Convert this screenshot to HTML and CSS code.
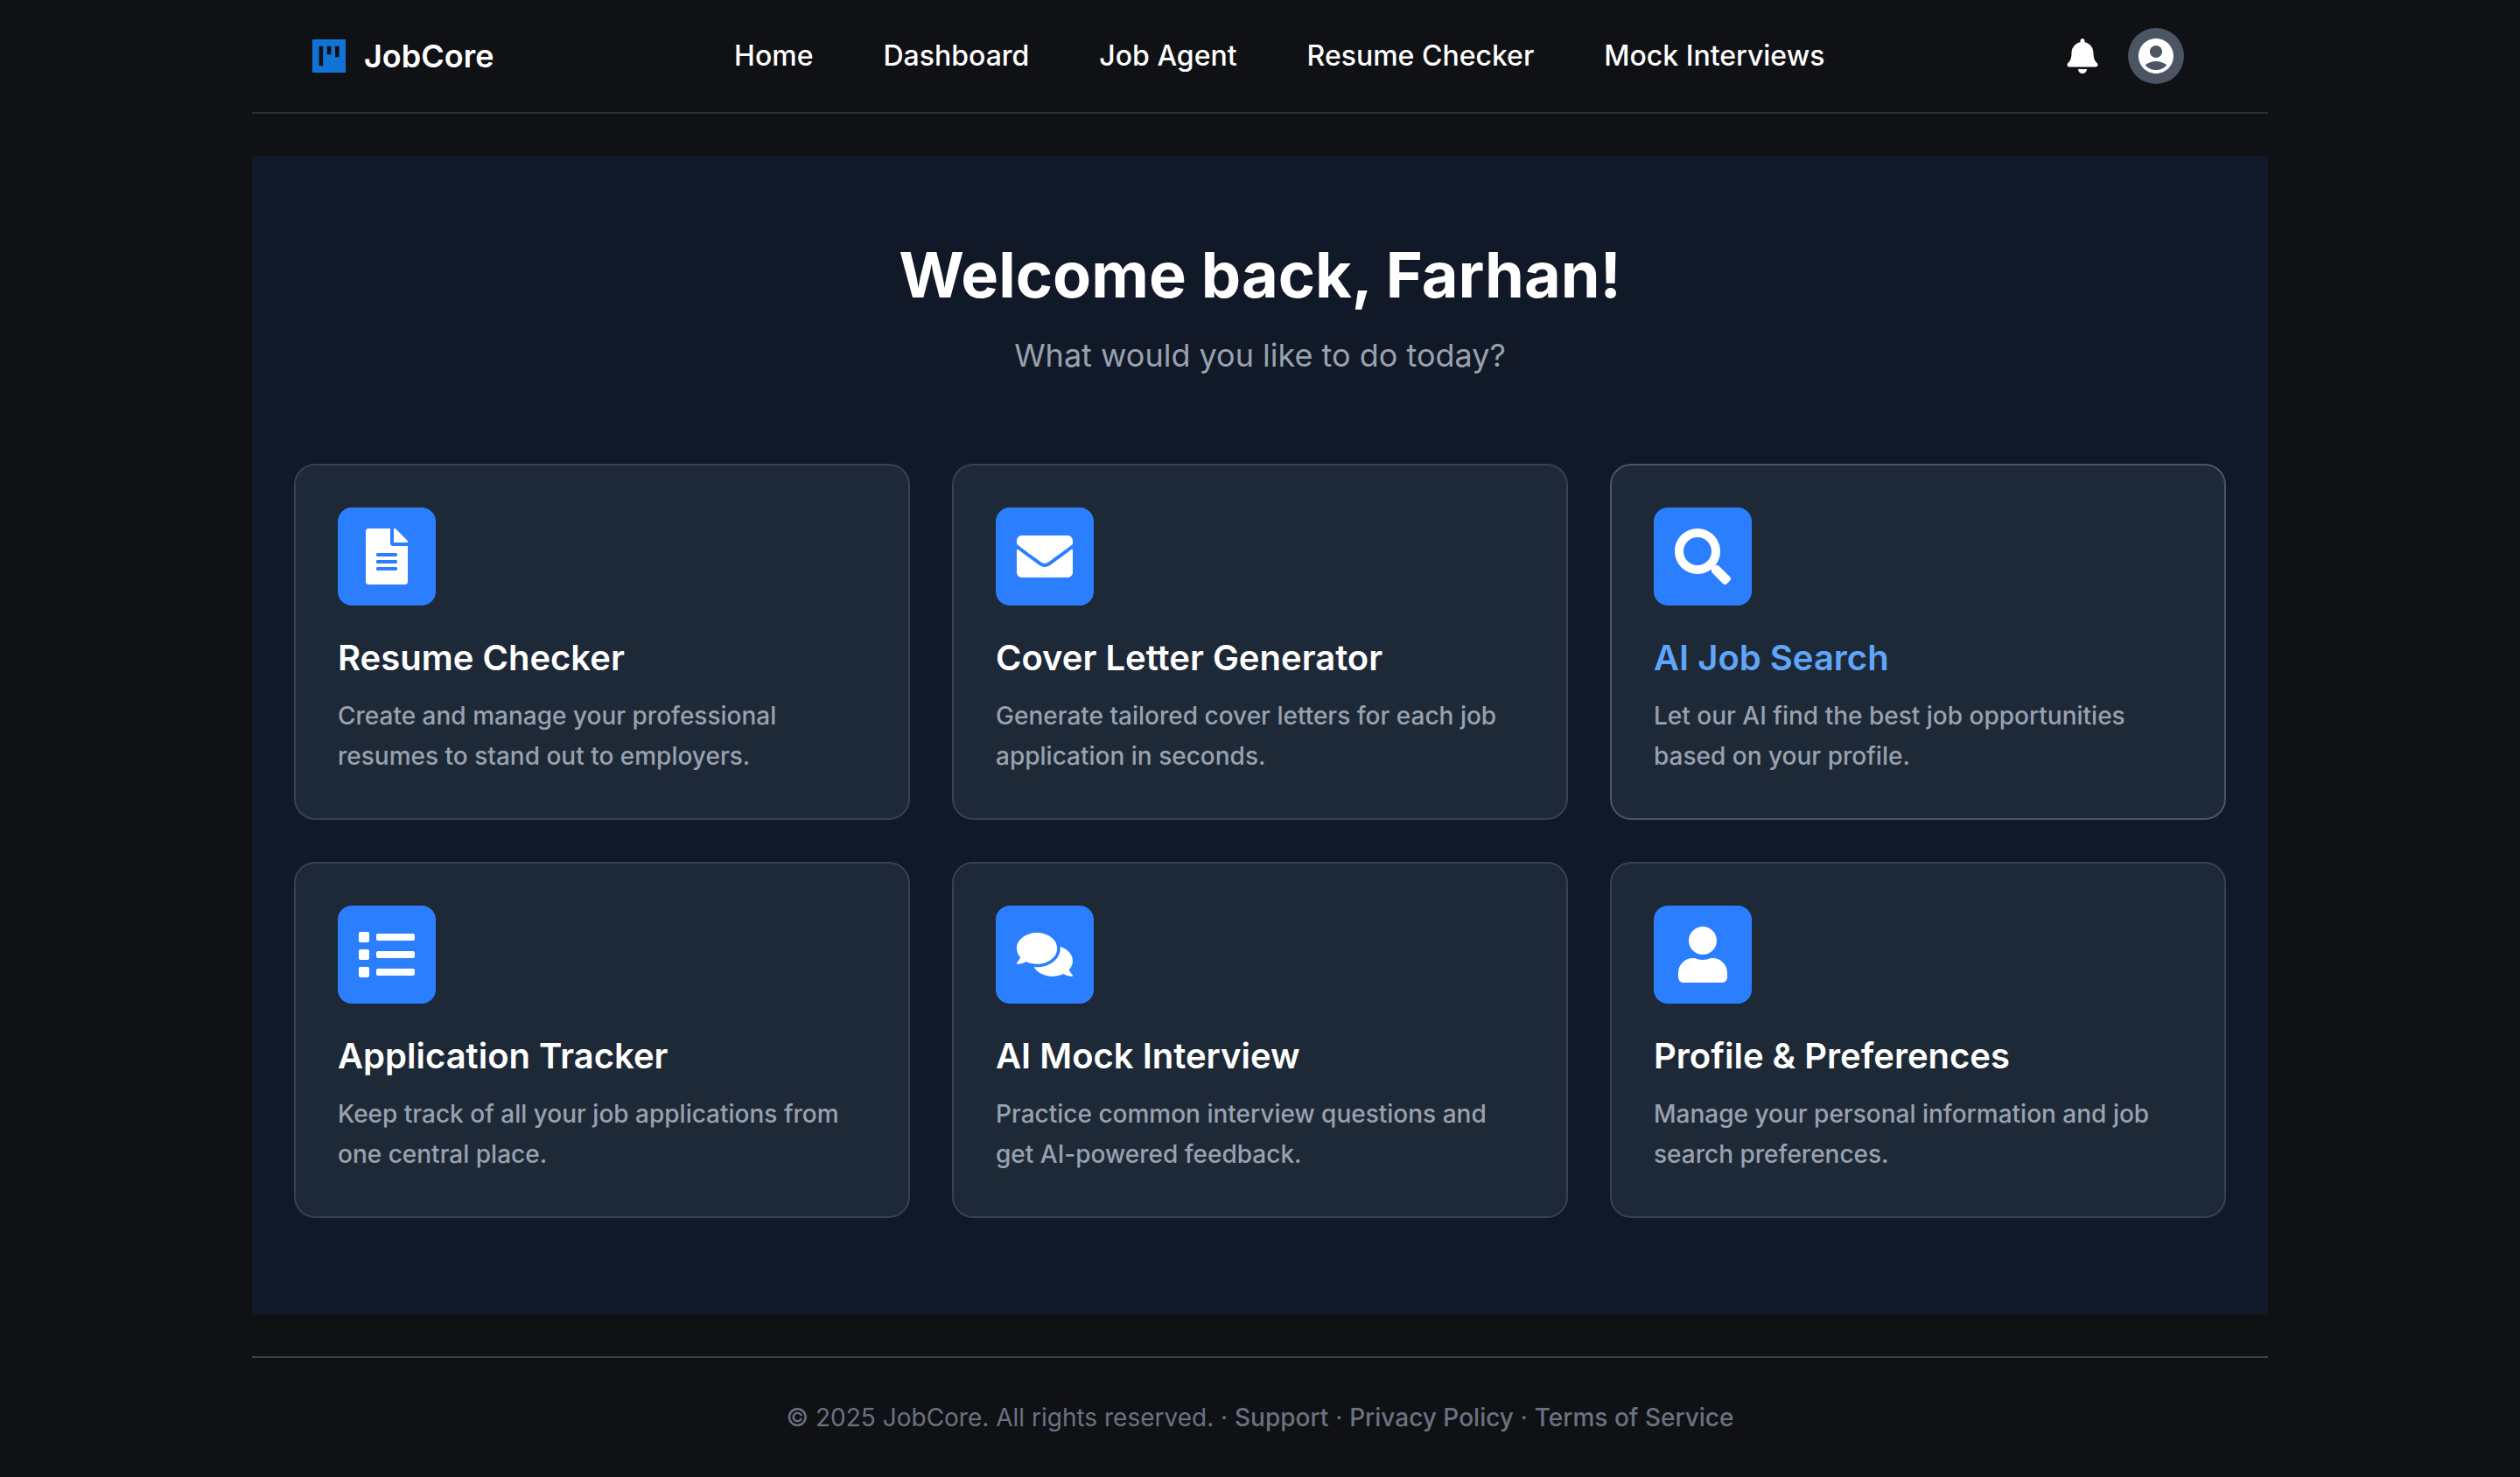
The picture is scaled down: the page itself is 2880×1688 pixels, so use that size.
FILE: index.html
```html
<!DOCTYPE html>
<html lang="en">
<head>
<meta charset="utf-8">
<meta name="viewport" content="width=device-width, initial-scale=1">
<title>JobCore</title>
<link rel="stylesheet" href="styles.css">
</head>
<body>
<header class="header">
  <a class="brand" href="#">
    <svg class="brand-icon" viewBox="0 0 48 48" aria-hidden="true"><path fill="#1273d6" fill-rule="evenodd" d="M6 5h36a1 1 0 0 1 1 1v36a1 1 0 0 1-1 1H6a1 1 0 0 1-1-1V6a1 1 0 0 1 1-1zM12.600 12.700h4.600v22.600h-4.600zM21.800 12.700h4.600v9.600h-4.600zM31 12.700h4.600v12.600H31z"/></svg>
    <span>JobCore</span>
  </a>
  <nav class="nav">
    <a href="#">Home</a>
    <a href="#">Dashboard</a>
    <a href="#">Job Agent</a>
    <a href="#">Resume Checker</a>
    <a href="#">Mock Interviews</a>
  </nav>
  <div class="actions">
    <button class="icon-button" type="button" aria-label="Notifications">
      <svg class="bell" viewBox="0 0 448 512" aria-hidden="true"><path fill="currentColor" d="M224 512c35.320 0 63.970-28.650 63.970-64H160.030c0 35.350 28.650 64 63.970 64zm215.390-149.710c-19.320-20.760-55.470-51.990-55.470-154.290 0-77.700-54.480-139.900-127.940-155.160V32c0-17.670-14.320-32-31.980-32s-31.980 14.330-31.980 32v20.840C118.560 68.100 64.080 130.300 64.080 208c0 102.300-36.150 133.530-55.470 154.290-6 6.450-8.660 14.160-8.610 21.710.11 16.400 12.980 32 32.100 32h383.800c19.120 0 32-15.600 32.100-32 .05-7.550-2.610-15.270-8.610-21.710z"/></svg>
    </button>
    <button class="icon-button avatar" type="button" aria-label="Account">
      <svg class="account" viewBox="0 0 24 24" aria-hidden="true"><path fill="currentColor" d="M12 2C6.480 2 2 6.480 2 12s4.480 10 10 10 10-4.480 10-10S17.520 2 12 2zm0 4c1.930 0 3.500 1.570 3.500 3.500S13.930 13 12 13s-3.500-1.570-3.500-3.500S10.070 6 12 6zm0 14c-2.030 0-4.430-.82-6.140-2.880C7.550 15.800 9.680 15 12 15s4.450.8 6.140 2.120C16.430 19.180 14.030 20 12 20z"/></svg>
    </button>
  </div>
</header>

<main class="main">
  <h1 class="welcome">Welcome back, Farhan!</h1>
  <p class="prompt">What would you like to do today?</p>
  <div class="cards">
    <a class="card" href="#">
      <span class="tile"><svg viewBox="0 0 384 512" aria-hidden="true"><path fill="currentColor" d="M224 136V0H24C10.700 0 0 10.700 0 24v464c0 13.300 10.700 24 24 24h336c13.300 0 24-10.700 24-24V160H248c-13.200 0-24-10.800-24-24zm64 236c0 6.600-5.400 12-12 12H108c-6.600 0-12-5.400-12-12v-8c0-6.600 5.400-12 12-12h168c6.600 0 12 5.400 12 12v8zm0-64c0 6.600-5.400 12-12 12H108c-6.600 0-12-5.400-12-12v-8c0-6.600 5.400-12 12-12h168c6.600 0 12 5.400 12 12v8zm0-72v8c0 6.600-5.400 12-12 12H108c-6.600 0-12-5.400-12-12v-8c0-6.600 5.400-12 12-12h168c6.600 0 12 5.400 12 12zm96-114.100v6.100H256V0h6.100c6.400 0 12.500 2.500 17 7l97.900 98c4.500 4.500 7 10.600 7 16.900z"/></svg></span>
      <h2 class="card-title">Resume Checker</h2>
      <p class="card-text">Create and manage your professional resumes to stand out to employers.</p>
    </a>
    <a class="card" href="#">
      <span class="tile"><svg viewBox="0 0 512 512" aria-hidden="true"><path fill="currentColor" d="M502.300 190.800c3.900-3.100 9.700-.2 9.700 4.700V400c0 26.500-21.500 48-48 48H48c-26.500 0-48-21.500-48-48V195.600c0-5 5.700-7.800 9.700-4.700 22.400 17.400 52.100 39.500 154.100 113.600 21.100 15.400 56.700 47.800 92.200 47.600 35.700.3 72-32.800 92.300-47.600 102-74.100 131.600-96.300 154-113.700zM256 320c23.200.4 56.600-29.200 73.400-41.400 132.700-96.300 142.800-104.700 173.400-128.700 5.800-4.500 9.200-11.500 9.200-18.900v-19c0-26.500-21.500-48-48-48H48c-26.500 0-48 21.500-48 48v19c0 7.400 3.400 14.300 9.200 18.900 30.600 23.900 40.700 32.400 173.400 128.700 16.800 12.200 50.200 41.800 73.400 41.400z"/></svg></span>
      <h2 class="card-title">Cover Letter Generator</h2>
      <p class="card-text">Generate tailored cover letters for each job application in seconds.</p>
    </a>
    <a class="card card-active" href="#">
      <span class="tile"><svg viewBox="0 0 512 512" aria-hidden="true"><path fill="currentColor" d="M505 442.700L405.300 343c-4.500-4.500-10.600-7-17-7H372c27.600-35.300 44-79.700 44-128C416 93.100 322.900 0 208 0S0 93.100 0 208s93.100 208 208 208c48.300 0 92.700-16.400 128-44v16.300c0 6.400 2.500 12.500 7 17l99.700 99.700c9.400 9.400 24.600 9.400 33.900 0l28.300-28.300c9.400-9.400 9.400-24.600.1-34zM208 336c-70.700 0-128-57.200-128-128 0-70.700 57.200-128 128-128 70.700 0 128 57.200 128 128 0 70.700-57.200 128-128 128z"/></svg></span>
      <h2 class="card-title">AI Job Search</h2>
      <p class="card-text">Let our AI find the best job opportunities based on your profile.</p>
    </a>
    <a class="card" href="#">
      <span class="tile"><svg viewBox="0 0 512 512" aria-hidden="true"><path fill="currentColor" d="M80 368H16a16 16 0 0 0-16 16v64a16 16 0 0 0 16 16h64a16 16 0 0 0 16-16v-64a16 16 0 0 0-16-16zm0-320H16A16 16 0 0 0 0 64v64a16 16 0 0 0 16 16h64a16 16 0 0 0 16-16V64a16 16 0 0 0-16-16zm0 160H16a16 16 0 0 0-16 16v64a16 16 0 0 0 16 16h64a16 16 0 0 0 16-16v-64a16 16 0 0 0-16-16zm416 176H176a16 16 0 0 0-16 16v32a16 16 0 0 0 16 16h320a16 16 0 0 0 16-16v-32a16 16 0 0 0-16-16zm0-320H176a16 16 0 0 0-16 16v32a16 16 0 0 0 16 16h320a16 16 0 0 0 16-16V80a16 16 0 0 0-16-16zm0 160H176a16 16 0 0 0-16 16v32a16 16 0 0 0 16 16h320a16 16 0 0 0 16-16v-32a16 16 0 0 0-16-16z"/></svg></span>
      <h2 class="card-title">Application Tracker</h2>
      <p class="card-text">Keep track of all your job applications from one central place.</p>
    </a>
    <a class="card" href="#">
      <span class="tile"><svg viewBox="0 0 576 512" aria-hidden="true"><path fill="currentColor" d="M416 192c0-88.400-93.100-160-208-160S0 103.600 0 192c0 34.300 14.100 65.900 38 92-13.400 30.200-35.500 54.200-35.800 54.500-2.200 2.300-2.800 5.700-1.500 8.700S4.800 352 8 352c36.600 0 66.900-12.300 88.700-25 32.200 15.700 70.300 25 111.300 25 114.900 0 208-71.600 208-160zm122 220c23.900-26 38-57.700 38-92 0-66.900-53.500-124.200-129.300-148.100.9 6.600 1.300 13.300 1.300 20.100 0 105.900-107.700 192-240 192-10.800 0-21.300-.8-31.700-1.900C207.800 439.600 281.800 480 368 480c41 0 79.100-9.200 111.300-25 21.800 12.700 52.100 25 88.700 25 3.200 0 6.100-1.900 7.300-4.800 1.300-2.900.7-6.300-1.500-8.700-.3-.3-22.400-24.200-35.800-54.500z"/></svg></span>
      <h2 class="card-title">AI Mock Interview</h2>
      <p class="card-text">Practice common interview questions and get AI-powered feedback.</p>
    </a>
    <a class="card" href="#">
      <span class="tile"><svg viewBox="0 0 448 512" aria-hidden="true"><path fill="currentColor" d="M224 256c70.700 0 128-57.300 128-128S294.700 0 224 0 96 57.300 96 128s57.300 128 128 128zm89.600 32h-16.700c-22.200 10.200-46.900 16-72.900 16s-50.600-5.800-72.900-16h-16.700C60.200 288 0 348.200 0 422.400V464c0 26.500 21.500 48 48 48h352c26.500 0 48-21.500 48-48v-41.600c0-74.200-60.200-134.400-134.400-134.400z"/></svg></span>
      <h2 class="card-title">Profile &amp; Preferences</h2>
      <p class="card-text">Manage your personal information and job search preferences.</p>
    </a>
  </div>
</main>

<footer class="footer">
  <p>© 2025 JobCore. All rights reserved. · <a href="#">Support</a> · <a href="#">Privacy Policy</a> · <a href="#">Terms of Service</a></p>
</footer>
</body>
</html>
```
FILE: styles.css
```css
* {
  box-sizing: border-box;
  margin: 0;
}

body {
  display: flex;
  flex-direction: column;
  min-height: 100vh;
  padding: 0 10%;
  background: #101114;
  color: #fff;
  font-family: Inter, "Liberation Sans", sans-serif;
  font-size: 28px;
}

a {
  color: inherit;
  text-decoration: none;
}

.header {
  display: flex;
  align-items: center;
  justify-content: space-between;
  padding: 32px 96px 32px 64px;
  border-bottom: 2px solid #283039;
}

.brand {
  display: flex;
  align-items: center;
  gap: 16px;
  font-size: 36px;
  font-weight: 600;
  line-height: 48px;
}

.brand-icon {
  width: 48px;
  height: 48px;
}

.nav {
  display: flex;
  gap: 80px;
  font-size: 32px;
  font-weight: 500;
  line-height: 48px;
}

.actions {
  display: flex;
  align-items: center;
  gap: 32px;
}

.icon-button {
  display: flex;
  align-items: center;
  justify-content: center;
  padding: 0;
  border: 0;
  background: none;
  color: #fff;
}

.bell {
  width: 40px;
  height: 40px;
}

.avatar {
  width: 64px;
  height: 64px;
  border-radius: 50%;
  background: #4b5564;
}

.account {
  width: 48px;
  height: 48px;
}

.main {
  flex: 1;
  margin: 48px 0;
  padding: 96px 48px;
  background: #111827;
}

.welcome {
  font-size: 72px;
  font-weight: 700;
  line-height: 80px;
  text-align: center;
}

.prompt {
  margin: 24px 0 96px;
  color: #99a1af;
  font-size: 36px;
  line-height: 56px;
  text-align: center;
}

.cards {
  display: grid;
  grid-template-columns: repeat(3, 1fr);
  gap: 48px;
}

.card {
  padding: 48px;
  border: 2px solid #374152;
  border-radius: 24px;
  background: #1e2937;
}

.card-active {
  border-color: #4b5564;
}

.tile {
  display: flex;
  align-items: center;
  justify-content: center;
  width: 112px;
  height: 112px;
  border-radius: 16px;
  background: #2b7fff;
}

.tile svg {
  width: 64px;
  height: 64px;
}

.card-title {
  margin: 32px 0 15px;
  font-size: 40px;
  font-weight: 600;
  line-height: 56px;
}

.card-active .card-title {
  color: #60a5fa;
}

.card-text {
  color: #99a1af;
  font-weight: 500;
  line-height: 46px;
}

.footer {
  padding: 48px 0;
  border-top: 2px solid #374152;
  color: #6a7282;
  line-height: 40px;
  text-align: center;
}

.footer a {
  font-weight: 500;
}
```
